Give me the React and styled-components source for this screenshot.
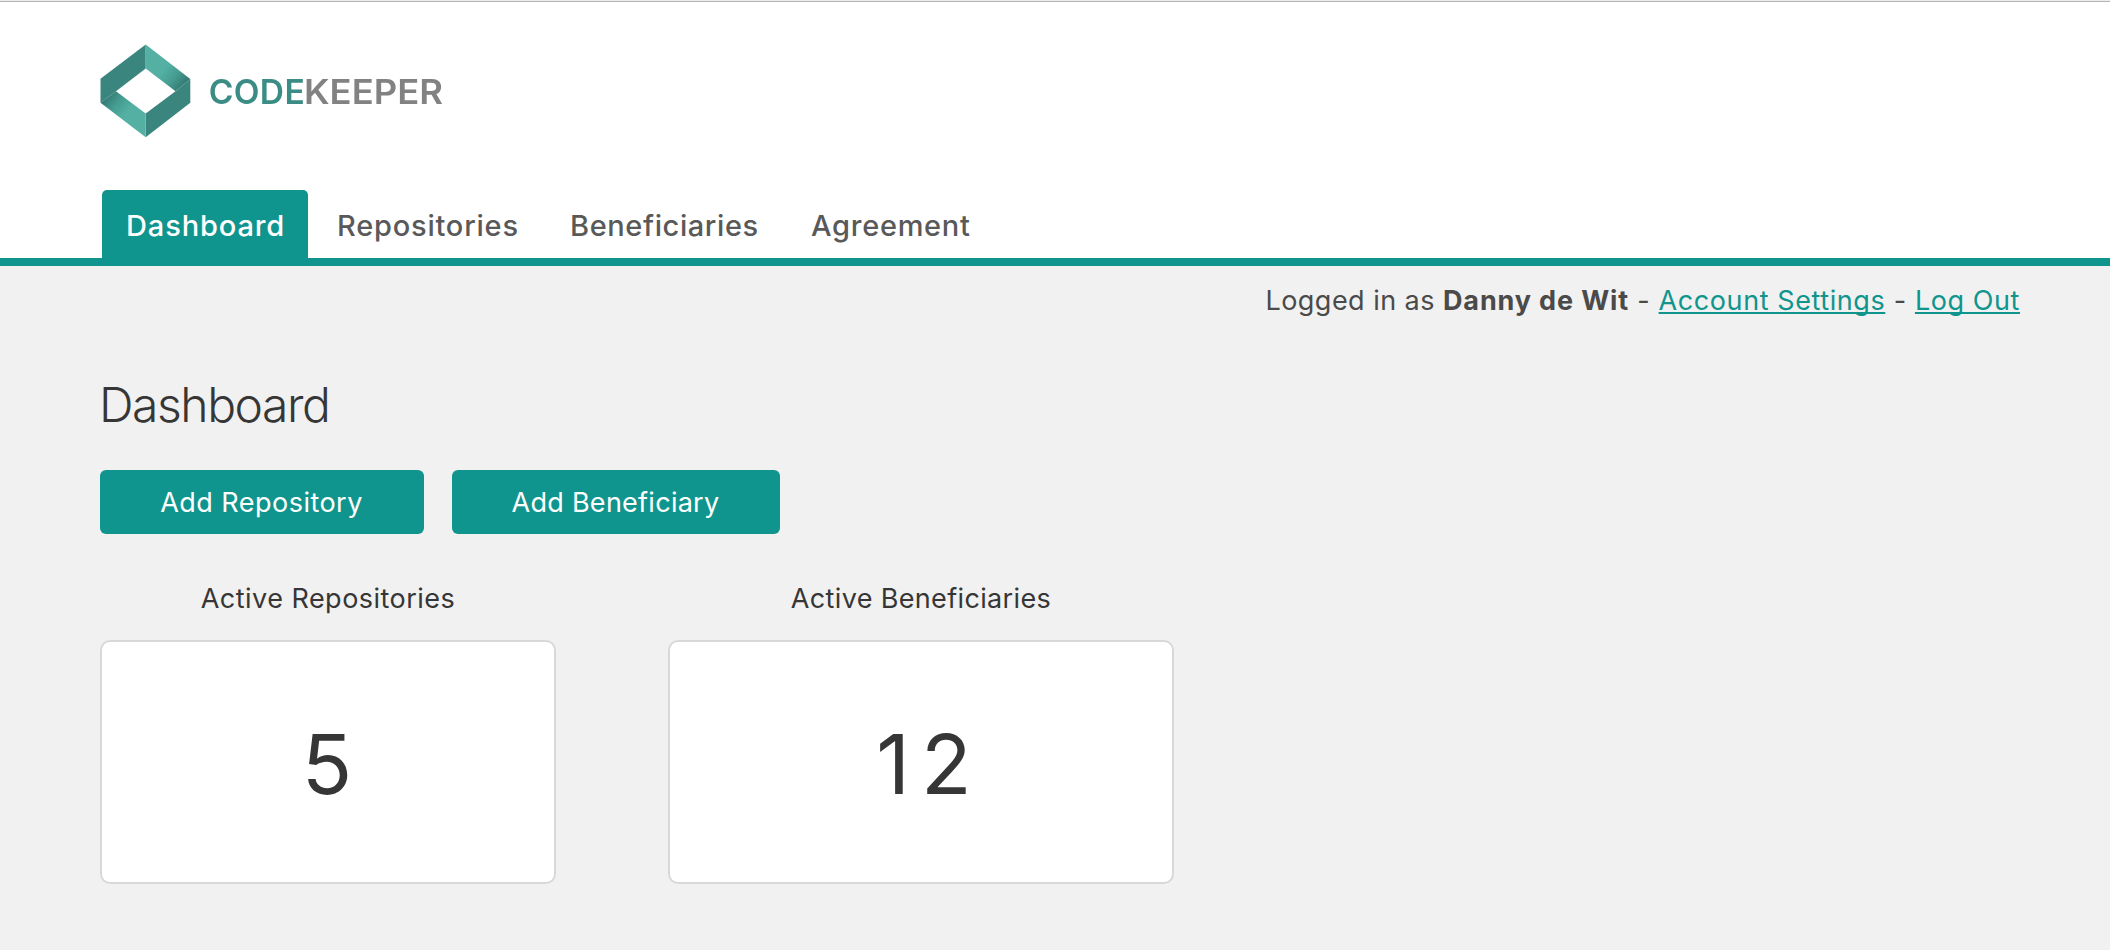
import React from "react";
import styled, { createGlobalStyle } from "styled-components";

const teal = "#0f958d";

const GlobalStyle = createGlobalStyle`
  *, *::before, *::after { box-sizing: border-box; }
  body {
    margin: 0;
    background: #f1f1f1;
    color: #363636;
    font-family: Inter, "Liberation Sans", sans-serif;
    font-size: 27px;
    -webkit-font-smoothing: antialiased;
  }
`;

const Page = styled.div`
  min-height: 950px;
  display: flex;
  flex-direction: column;
`;

const Header = styled.header`
  height: 266px;
  display: flex;
  flex-direction: column;
  background: #fff;
  border-bottom: 8px solid ${teal};
`;

const TopRule = styled.div`
  height: 2px;
  background: #b4b4b4;
  border-top: 1px solid #ececec;
`;

const Brand = styled.a`
  display: block;
  height: 188px;
  padding: 38px 0 0 96px;
`;

const LogoImage = styled.svg`
  display: block;
  filter: blur(0.5px);
`;

const Nav = styled.nav`
  display: flex;
  gap: 5px;
  padding-left: 102px;
`;

const Tab = styled.a`
  width: ${(p) => p.$width}px;
  height: 68px;
  padding: 3px 0 0 24px;
  line-height: 65px;
  border-radius: 5px 5px 0 0;
  font-size: 29px;
  font-weight: 500;
  letter-spacing: ${(p) => p.$tracking}px;
  white-space: nowrap;
  color: ${(p) => (p.$active ? "#fff" : "#595959")};
  background: ${(p) => (p.$active ? teal : "transparent")};
`;

const Account = styled.div`
  display: flex;
  justify-content: flex-end;
  height: 68px;
  padding: 18px 90px 0 0;
  line-height: 34px;
  color: #4a4a4a;
  letter-spacing: 0.46px;
  white-space: pre;
`;

const UserName = styled.strong`
  font-weight: 700;
  letter-spacing: 0.86px;
`;

const Separator = styled.span`
  width: 29.6px;
  text-align: center;
`;

const AccountLink = styled.a`
  color: ${teal};
  letter-spacing: 0.58px;
  text-decoration: underline;
  text-decoration-thickness: 2px;
  text-underline-offset: 2px;
  text-decoration-skip-ink: none;
`;

const Main = styled.main`
  padding: 0 100px;
`;

const Title = styled.h1`
  margin: 40px 0 0 -1px;
  height: 96px;
  line-height: 61px;
  font-size: 48px;
  font-weight: 300;
  letter-spacing: -1.45px;
`;

const Actions = styled.div`
  display: flex;
  gap: 28px;
`;

const Button = styled.button`
  width: ${(p) => p.$width}px;
  height: 64px;
  padding: 0 1px 0 0;
  border: 0;
  border-radius: 6px;
  background: ${teal};
  color: #fff;
  font: inherit;
  letter-spacing: ${(p) => p.$tracking}px;
`;

const Stats = styled.section`
  display: flex;
  gap: 112px;
  padding-top: 48px;
`;

const Stat = styled.div`
  width: ${(p) => p.$width}px;
`;

const StatLabel = styled.div`
  height: 58px;
  line-height: 33px;
  text-align: center;
  letter-spacing: ${(p) => p.$tracking}px;
`;

const StatCard = styled.div`
  height: 244px;
  display: flex;
  align-items: center;
  justify-content: center;
  padding: 4px ${(p) => (p.$shift ? 0 : 2)}px 0 ${(p) => p.$shift || 0}px;
  border: 2px solid #d8d8d8;
  border-radius: 10px;
  background: #fff;
  font-size: 83px;
  letter-spacing: ${(p) => p.$tracking || 0}px;
`;

function Logo() {
  return (
    <LogoImage width="354" height="104" viewBox="96 40 354 104">
      <defs>
        <linearGradient id="upper" gradientUnits="userSpaceOnUse" x1="152" y1="60" x2="186" y2="88">
          <stop offset="0.35" stopColor="#53b0a3" />
          <stop offset="0.65" stopColor="#459b90" />
          <stop offset="1" stopColor="#2f716b" />
        </linearGradient>
        <linearGradient id="lower" gradientUnits="userSpaceOnUse" x1="139" y1="121" x2="105" y2="93">
          <stop offset="0.35" stopColor="#53b0a3" />
          <stop offset="0.65" stopColor="#459b90" />
          <stop offset="1" stopColor="#2f716b" />
        </linearGradient>
      </defs>
      <path fill="#3a857d" d="M145.7 44.5 100.5 78.7v24L116 91.2l29.7-22.7z" />
      <path fill="url(#upper)" d="M145.7 44.5 190.3 78.9 175.5 91.2l-29.8-22.7z" />
      <path fill="#3a857d" d="M190.3 78.9v23.8L145.7 137.2v-23.7L175.5 91.2z" />
      <path fill="url(#lower)" d="M100.5 102.7 116 91.2l29.7 22.3V137.2z" />
      <g fontFamily="Inter, 'Liberation Sans', sans-serif" fontSize="33.5" fontWeight="600">
        <text y="103.5" x="208.7" textLength="96" fill="#3b8c84">CODE</text>
        <text y="103.5" x="304" textLength="139" lengthAdjust="spacingAndGlyphs" fill="#828282">KEEPER</text>
      </g>
    </LogoImage>
  );
}

export default function App() {
  return (
    <Page>
      <GlobalStyle />
      <Header>
        <TopRule />
        <Brand>
          <Logo />
        </Brand>
        <Nav>
          <Tab $active $width={206} $tracking={0.88}>Dashboard</Tab>
          <Tab $width={228} $tracking={0.78}>Repositories</Tab>
          <Tab $width={236} $tracking={0.6}>Beneficiaries</Tab>
          <Tab $width={206} $tracking={0.72}>Agreement</Tab>
        </Nav>
      </Header>
      <Account>
        <span>Logged in as </span>
        <UserName>Danny de Wit</UserName>
        <Separator>-</Separator>
        <AccountLink>Account Settings</AccountLink>
        <Separator>-</Separator>
        <AccountLink>Log Out</AccountLink>
      </Account>
      <Main>
        <Title>Dashboard</Title>
        <Actions>
          <Button $width={324} $tracking={0.47}>Add Repository</Button>
          <Button $width={328} $tracking={0.27}>Add Beneficiary</Button>
        </Actions>
        <Stats>
          <Stat $width={456}>
            <StatLabel $tracking={0.48}>Active Repositories</StatLabel>
            <StatCard>5</StatCard>
          </Stat>
          <Stat $width={506}>
            <StatLabel $tracking={0.35}>Active Beneficiaries</StatLabel>
            <StatCard $tracking={11} $shift={17}>12</StatCard>
          </Stat>
        </Stats>
      </Main>
    </Page>
  );
}
